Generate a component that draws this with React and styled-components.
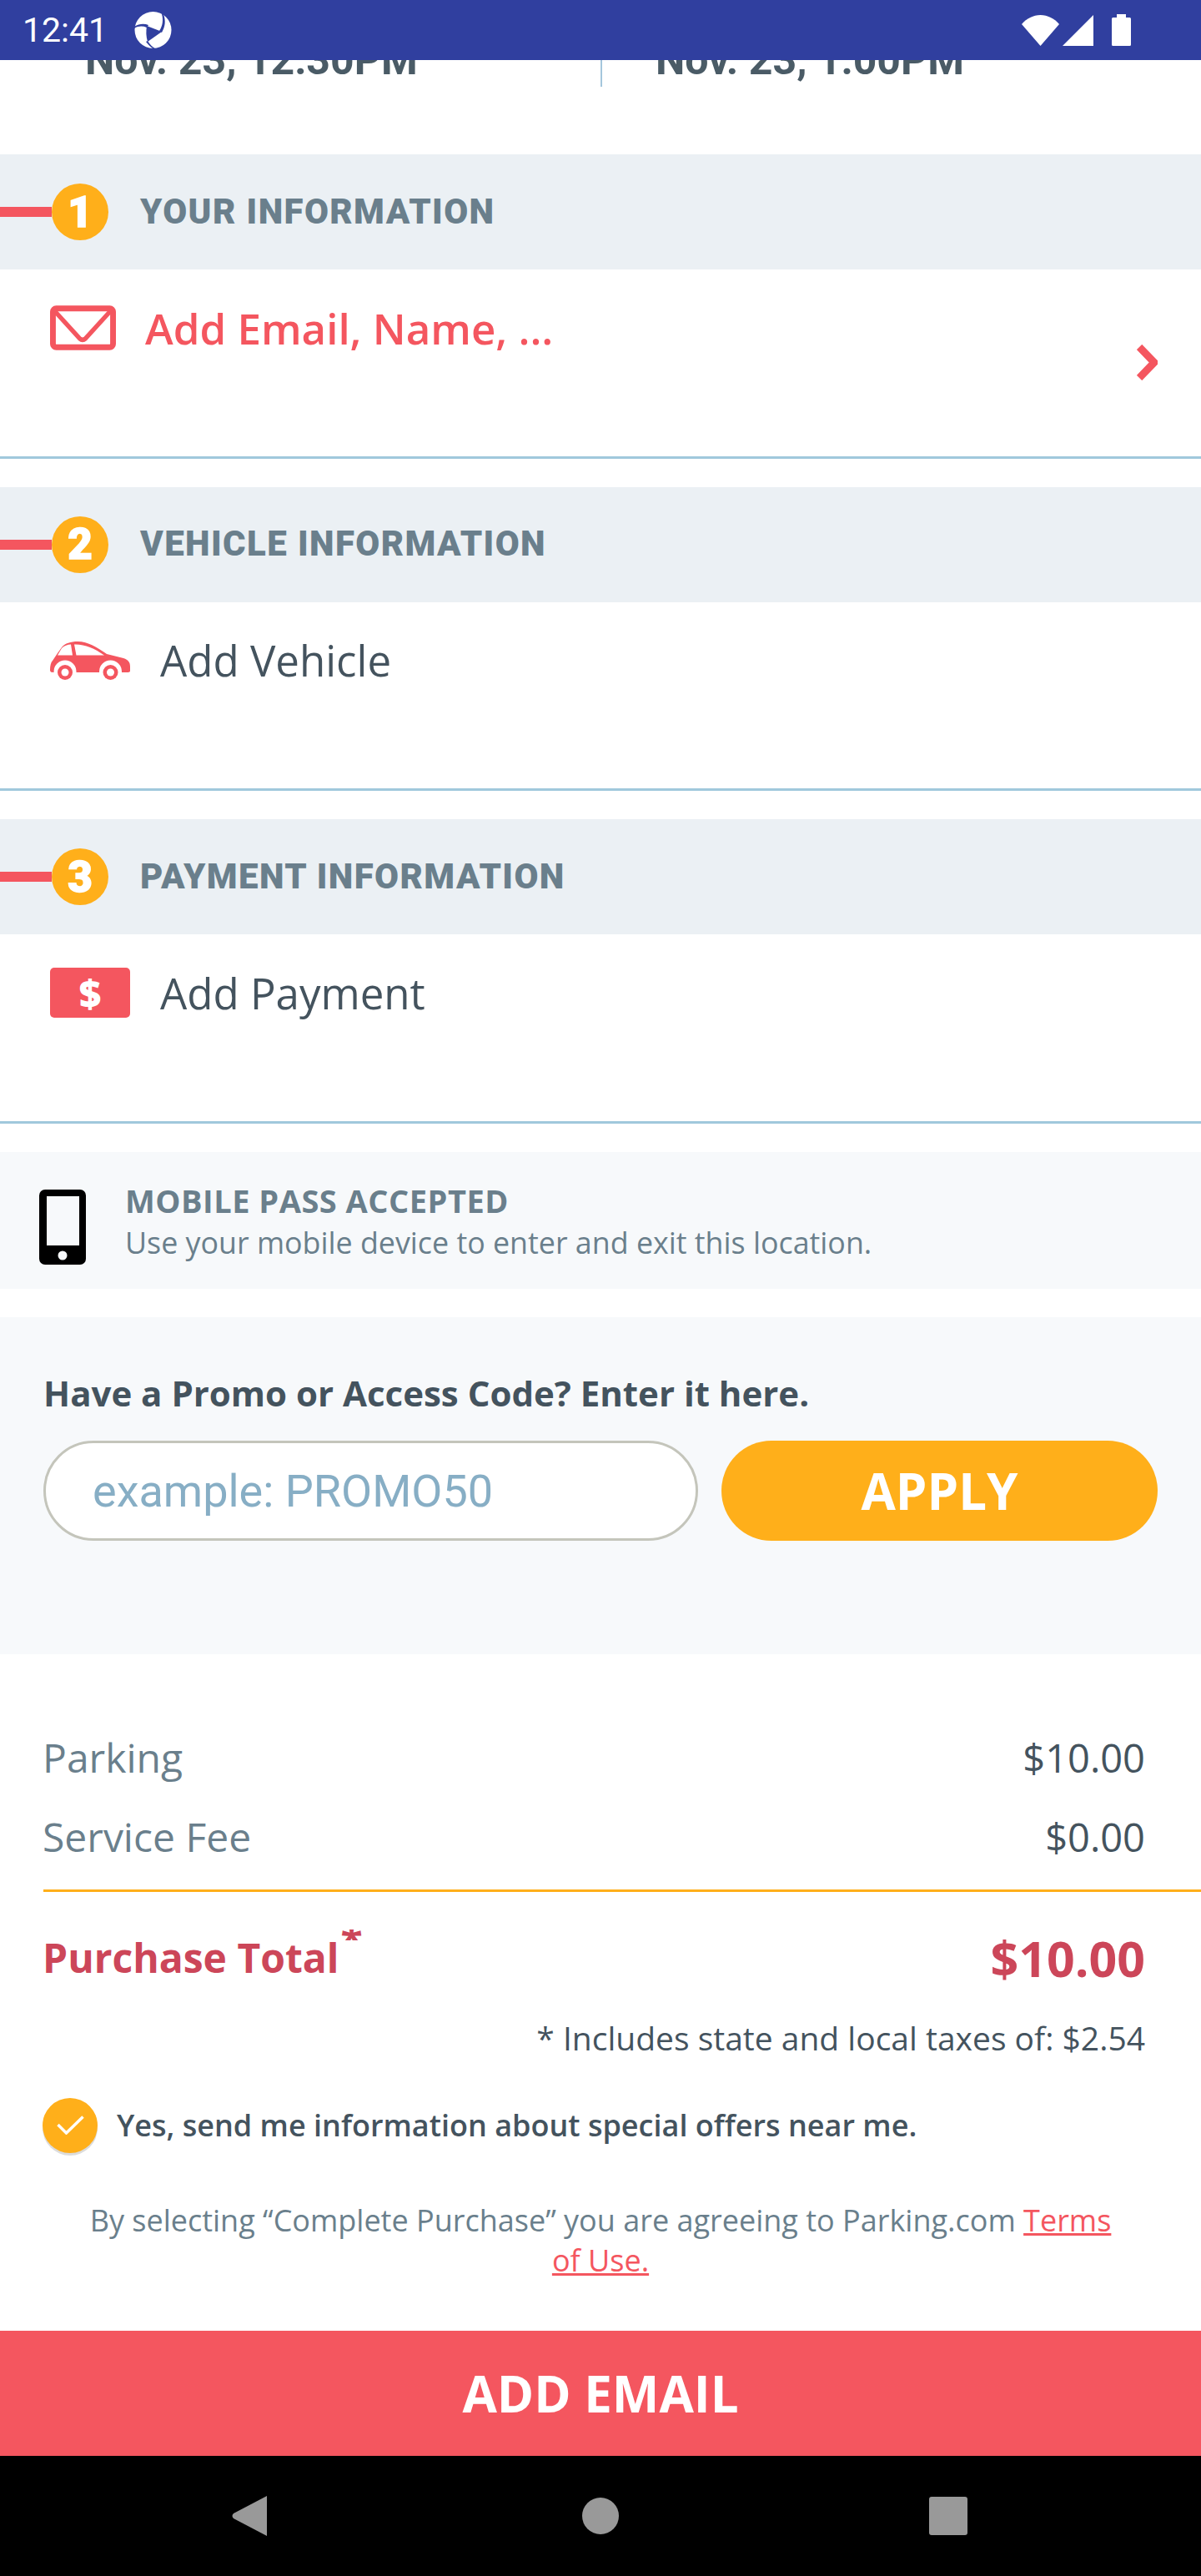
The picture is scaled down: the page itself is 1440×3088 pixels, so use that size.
import React from "react";
import styled, { createGlobalStyle } from "styled-components";

const OPEN = `"Open Sans", "Noto Sans", sans-serif`;
const ROBOTO = `Roboto, "Liberation Sans", sans-serif`;

const Global = createGlobalStyle`
  html, body { margin: 0; padding: 0; background: #fff; }
  * { box-sizing: border-box; }
`;

const Page = styled.div`
  width: 1440px;
  height: 3088px;
  display: flex;
  flex-direction: column;
  overflow: hidden;
  background: #fff;
  font-family: ${OPEN};
`;

const StatusBar = styled.div`
  height: 72px;
  flex: none;
  background: #303f9f;
  display: flex;
  align-items: center;
  padding: 0 84px 0 27px;
  color: #fff;
`;
const Clock = styled.span`
  font: 400 41px/1 ${ROBOTO};
  width: 134px;
`;
const StatusIcons = styled.div`
  margin-left: auto;
  display: flex;
  align-items: center;
`;
const Signal = styled.svg`
  margin-left: 4px;
`;
const Battery = styled.svg`
  margin-left: 22px;
`;

const Schedule = styled.div`
  height: 113px;
  flex: none;
  overflow: hidden;
  display: grid;
  grid-template-columns: 720px 720px;
`;
const ScheduleCell = styled.div`
  height: 32px;
  padding-left: ${(p) => (p.$second ? "64px" : "102px")};
  ${(p) => (p.$second ? "border-left: 2px solid #a4c6dc;" : "")}
`;
const ScheduleTime = styled.div`
  margin-top: -28px;
  font: 700 50px/56px ${ROBOTO};
  color: #4a5b66;
  white-space: nowrap;
`;

const Step = styled.section`
  flex: none;
  margin-bottom: 34px;
`;
const StepHeader = styled.div`
  height: 138px;
  background: #ebf0f4;
  display: flex;
  align-items: center;
`;
const StepLine = styled.div`
  width: 62px;
  height: 12px;
  background: #f4565f;
`;
const StepBadge = styled.div`
  width: 68px;
  height: 68px;
  border-radius: 50%;
  background: #ffaf1a;
  color: #fff;
  display: flex;
  align-items: center;
  justify-content: center;
  font: 900 51px/1 ${ROBOTO};
  -webkit-text-stroke: 1.5px #fff;
`;
const StepTitle = styled.h2`
  margin: -1px 0 0 38px;
  font: 900 42px/1 ${ROBOTO};
  letter-spacing: 1.4px;
  color: #6a7f8c;
  white-space: nowrap;
`;
const StepRow = styled.div`
  height: 226.5px;
  border-bottom: 3px solid #a0c8dc;
  display: flex;
  align-items: center;
  padding: 0 52px 0 60px;
`;
const StepMain = styled.div`
  align-self: flex-start;
  margin-top: 40px;
  height: 60px;
  display: flex;
  align-items: center;
`;
const StepLabel = styled.span`
  margin: -1px 0 0 ${(p) => p.$gap}px;
  font: ${(p) => (p.$alert ? 600 : 400)} 51px/60px ${OPEN};
  color: ${(p) => (p.$alert ? "#f4565f" : "#44535e")};
  white-space: nowrap;
`;
const Chevron = styled.svg`
  margin-left: auto;
`;
const DollarTag = styled.div`
  width: 96px;
  height: 60px;
  border-radius: 5px;
  background: #f4565f;
  color: #fff;
  display: flex;
  align-items: center;
  justify-content: center;
  font: 800 46px/1 ${OPEN};
`;

const MobileBox = styled.div`
  height: 164px;
  flex: none;
  background: #f7f9fb;
  margin-bottom: 34px;
  padding: 33px 0 0 47px;
  display: flex;
  align-items: flex-start;
`;
const PhoneIcon = styled.svg`
  margin-top: 12px;
  flex: none;
`;
const MobileText = styled.div`
  margin-left: 47px;
`;
const MobileTitle = styled.div`
  font: 700 38px/50px ${OPEN};
  letter-spacing: 0.5px;
  color: #6a7f8c;
`;
const MobileDesc = styled.div`
  font: 400 35.8px/50px ${OPEN};
  color: #6a7f8c;
  white-space: nowrap;
`;

const Promo = styled.div`
  height: 404px;
  flex: none;
  background: #f7f9fb;
  padding: 64px 52px 0;
`;
const PromoTitle = styled.div`
  font: 700 42px/54px ${OPEN};
  color: #44535e;
`;
const PromoRow = styled.div`
  margin-top: 30px;
  display: flex;
  gap: 28px;
`;
const PromoInput = styled.div`
  width: 785px;
  height: 120px;
  border: 3px solid #c4c5bb;
  border-radius: 60px;
  background: #fff;
  padding: 3px 0 0 56px;
  display: flex;
  align-items: center;
  font: 400 54px/1 ${ROBOTO};
  color: #87aec5;
`;
const ApplyButton = styled.div`
  width: 523px;
  height: 120px;
  border-radius: 60px;
  background: #ffaf1a;
  color: #fff;
  display: flex;
  align-items: center;
  justify-content: center;
  font: 700 60px/1 ${OPEN};
`;

const Summary = styled.div`
  flex: 1;
  padding: 92px 0 0 52px;
  display: flex;
  flex-direction: column;
`;
const PriceRow = styled.div`
  height: 95px;
  padding-right: 67px;
  display: flex;
  justify-content: space-between;
  font-size: 48px;
  line-height: 64px;
`;
const PriceName = styled.span`
  color: #6a7f8c;
  margin-left: -1px;
`;
const PriceValue = styled.span`
  color: #44535e;
  font-size: 47px;
`;
const Rule = styled.div`
  height: 3px;
  background: #ffaf1a;
`;
const TotalRow = styled.div`
  margin-top: 44px;
  height: 70px;
  padding-right: 67px;
  display: flex;
  align-items: center;
  justify-content: space-between;
  color: #cc4659;
  font-weight: 700;
`;
const TotalName = styled.span`
  font-size: 48px;
  line-height: 70px;
  position: relative;
  margin-left: -1px;
`;
const TotalMark = styled.span`
  position: absolute;
  left: 100%;
  top: 1px;
  margin-left: 2px;
  height: 13px;
  overflow: hidden;
  font-size: 48px;
  line-height: 50px;
  display: block;
  width: 26px;
`;
const TotalMarkGlyph = styled.span`
  display: block;
  margin-top: -11px;
`;
const TotalValue = styled.span`
  font-size: 59px;
  line-height: 70px;
`;
const TaxNote = styled.div`
  margin-top: 35px;
  padding-right: 67px;
  text-align: right;
  font: 400 39px/52px ${OPEN};
  color: #44535e;
`;
const OfferRow = styled.div`
  margin-top: 46px;
  height: 66px;
  display: flex;
  align-items: center;
  font: 600 36px/50px ${OPEN};
  color: #44535e;
`;
const OfferCheck = styled.div`
  width: 66px;
  height: 66px;
  flex: none;
  border-radius: 50%;
  background: #ffaf1a;
  box-shadow: 0 3px 0 #dcdcdc;
  margin: 0 23px 0 -1px;
  display: flex;
  align-items: center;
  justify-content: center;
`;
const Terms = styled.div`
  margin: 57px 89px 0 37px;
  text-align: center;
  font: 400 36px/48px ${OPEN};
  color: #6a7f8c;
`;
const TermsLink = styled.a`
  color: #f4565f;
  text-decoration: underline;
`;

const AddEmailButton = styled.div`
  height: 150px;
  flex: none;
  background: #f4565f;
  color: #fff;
  display: flex;
  align-items: center;
  justify-content: center;
  font: 700 60px/1 ${OPEN};
`;
const NavBar = styled.div`
  height: 144px;
  flex: none;
  background: #000;
  display: flex;
  align-items: center;
  padding-left: 278px;
`;
const NavHome = styled.div`
  width: 44px;
  height: 44px;
  border-radius: 50%;
  background: #999;
  margin-left: 378px;
`;
const NavRecent = styled.div`
  width: 46px;
  height: 46px;
  border-radius: 3px;
  background: #999;
  margin-left: 372px;
`;

const WifiIcon = () => (
  <svg width="45" height="37" viewBox="0 0 45 37">
    <path d="M22.5 37L0 11C6 4 14 0 22.5 0S39 4 45 11Z" fill="#fff" />
  </svg>
);

const Logo = () => (
  <svg width="45" height="46" viewBox="0 0 45 46">
    <circle cx="22.5" cy="23" r="22" fill="#fff" />
    <path d="M15 18L33 25L16 37C14 31 14 24 15 18Z" fill="#303f9f" />
    <path d="M0 19C6 15 12 15 17 17L15 20C10 18 5 18 0 21Z" fill="#303f9f" />
    <path d="M35 4C38 12 37 19 33 26L30 24C34 18 35 11 33 4Z" fill="#303f9f" />
    <path d="M16 36C19 41 23 45 29 47L26 47C21 45 17 41 14 37Z" fill="#303f9f" />
  </svg>
);

const MailIcon = () => (
  <svg width="79" height="54" viewBox="0 0 80 54" fill="none" stroke="#f4565f">
    <rect x="3.5" y="3.5" width="73" height="47" rx="4" strokeWidth="7" />
    <path d="M6 7L36 40Q39.5 43 43 40L73 7" strokeWidth="5.5" />
  </svg>
);

const CarIcon = () => (
  <svg width="96" height="46" viewBox="0 0 96 46">
    <path
      d="M0 34C0 29 1 25 3 23L9 14L14 7C18 2 25 0 33 0C46 0 56 7 68 15L88 20C94 22 96 25 96 30V35C96 37 94 37 90 37H6C2 37 0 37 0 34Z"
      fill="#f4565f"
    />
    <path d="M9 16.5L14 8C17 5 21 3.5 25 3.5L27 16.5Z" fill="#fff" />
    <path d="M29 3.5C41 3 53 8 65 16.5H31.5Z" fill="#fff" />
    <circle cx="18" cy="36" r="13.5" fill="#fff" />
    <circle cx="72.5" cy="36" r="13.5" fill="#fff" />
    <circle cx="18" cy="37" r="9" fill="#f4565f" />
    <circle cx="18" cy="37" r="4.5" fill="#fff" />
    <circle cx="72.5" cy="37" r="9" fill="#f4565f" />
    <circle cx="72.5" cy="37" r="4.5" fill="#fff" />
  </svg>
);

const steps = [
  { n: "1", title: "YOUR INFORMATION", label: "Add Email, Name, ...", alert: true, gap: 35, icon: <MailIcon /> },
  { n: "2", title: "VEHICLE INFORMATION", label: "Add Vehicle", gap: 36, icon: <CarIcon /> },
  { n: "3", title: "PAYMENT INFORMATION", label: "Add Payment", gap: 36, icon: <DollarTag>$</DollarTag> },
];

export default function App() {
  return (
    <Page>
      <Global />
      <StatusBar>
        <Clock>12:41</Clock>
        <Logo />
        <StatusIcons>
          <WifiIcon />
          <Signal width="37" height="37" viewBox="0 0 37 37">
            <path d="M0 37L37 0V37Z" fill="#fff" />
          </Signal>
          <Battery width="23" height="38" viewBox="0 0 23 38">
            <path d="M6 0H17V4H21.5Q23 4 23 5.5V36.5Q23 38 21.5 38H1.5Q0 38 0 36.5V5.5Q0 4 1.5 4H6Z" fill="#fff" />
          </Battery>
        </StatusIcons>
      </StatusBar>

      <Schedule>
        <ScheduleCell>
          <ScheduleTime>Nov. 23, 12:30PM</ScheduleTime>
        </ScheduleCell>
        <ScheduleCell $second>
          <ScheduleTime>Nov. 23, 1:00PM</ScheduleTime>
        </ScheduleCell>
      </Schedule>

      {steps.map((s) => (
        <Step key={s.n}>
          <StepHeader>
            <StepLine />
            <StepBadge>{s.n}</StepBadge>
            <StepTitle>{s.title}</StepTitle>
          </StepHeader>
          <StepRow>
            <StepMain>
              {s.icon}
              <StepLabel $gap={s.gap} $alert={s.alert}>
                {s.label}
              </StepLabel>
            </StepMain>
            {s.alert && (
              <Chevron width="25" height="43" viewBox="0 0 25 43" fill="none" stroke="#f4565f" strokeWidth="9">
                <path d="M3 3L21 21.5L3 40" />
              </Chevron>
            )}
          </StepRow>
        </Step>
      ))}

      <MobileBox>
        <PhoneIcon width="56" height="90" viewBox="0 0 56 90">
          <rect width="56" height="90" rx="7" fill="#000" />
          <rect x="9" y="8" width="39" height="59" fill="#f7f9fb" />
          <circle cx="28" cy="79" r="5.5" fill="#f7f9fb" />
        </PhoneIcon>
        <MobileText>
          <MobileTitle>MOBILE PASS ACCEPTED</MobileTitle>
          <MobileDesc>Use your mobile device to enter and exit this location.</MobileDesc>
        </MobileText>
      </MobileBox>

      <Promo>
        <PromoTitle>Have a Promo or Access Code? Enter it here.</PromoTitle>
        <PromoRow>
          <PromoInput>example: PROMO50</PromoInput>
          <ApplyButton>APPLY</ApplyButton>
        </PromoRow>
      </Promo>

      <Summary>
        <PriceRow>
          <PriceName>Parking</PriceName>
          <PriceValue>$10.00</PriceValue>
        </PriceRow>
        <PriceRow>
          <PriceName>Service Fee</PriceName>
          <PriceValue>$0.00</PriceValue>
        </PriceRow>
        <Rule />
        <TotalRow>
          <TotalName>
            Purchase Total
            <TotalMark>
              <TotalMarkGlyph>*</TotalMarkGlyph>
            </TotalMark>
          </TotalName>
          <TotalValue>$10.00</TotalValue>
        </TotalRow>
        <TaxNote>* Includes state and local taxes of: $2.54</TaxNote>
        <OfferRow>
          <OfferCheck>
            <svg width="33" height="23" viewBox="0 0 33 23" fill="none" stroke="#fff" strokeWidth="3.5">
              <path d="M1.5 11L11.5 21L31.5 1.5" />
            </svg>
          </OfferCheck>
          Yes, send me information about special offers near me.
        </OfferRow>
        <Terms>
          By selecting “Complete Purchase” you are agreeing to Parking.com <TermsLink>Terms of Use.</TermsLink>
        </Terms>
      </Summary>

      <AddEmailButton>ADD EMAIL</AddEmailButton>
      <NavBar>
        <svg width="42" height="48" viewBox="0 0 42 48">
          <path d="M42 0V48L2 27Q-1 24 2 21Z" fill="#999" />
        </svg>
        <NavHome />
        <NavRecent />
      </NavBar>
    </Page>
  );
}
